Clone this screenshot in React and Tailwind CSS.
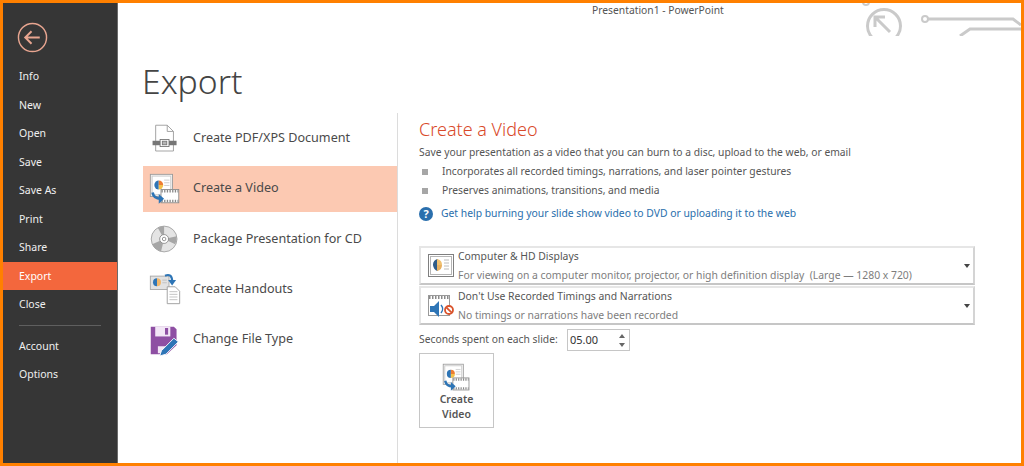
import React from 'react';

const navTop = ['Info', 'New', 'Open', 'Save', 'Save As', 'Print', 'Share', 'Export', 'Close'];
const navBottom = ['Account', 'Options'];

const PdfIcon = () => (
    <svg width="36" height="36" viewBox="0 0 36 36" fill="none">
        <path d="M7.500 2.500h13l7 7v22h-20z" stroke="#9a9a9a" strokeWidth="1" fill="#fff" />
        <path d="M20.500 2.500v7h7" stroke="#9a9a9a" />
        <rect x="4" y="20" width="27" height="5" fill="#767676" />
        <rect x="12.500" y="18.500" width="10" height="8" fill="#fff" stroke="#767676" />
        <rect x="15" y="20.500" width="5" height="4" fill="#b5b5b5" stroke="#767676" />
    </svg>
);

const VideoIcon = ({ size = 36 }) => (
    <svg width={size} height={size} viewBox="0 0 36 36" fill="none">
        <rect x="1.500" y="1.500" width="25" height="25" fill="#f4f4f4" stroke="#9a9a9a" />
        <rect x="3.500" y="3.500" width="21" height="21" fill="#fff" stroke="#c8c8c8" />
        <path d="M11 8.500a5 5 0 1 0 0 10z" fill="#2e75b6" />
        <path d="M11 8.500a5 5 0 0 1 5 5h-5z" fill="#ed7d31" />
        <path d="M11 13.500h5a5 5 0 0 1-5 5z" fill="#f3c14b" />
        <path d="M17 8h6M17 11h6M17 14h6" stroke="#c8c8c8" />
        <rect x="13.500" y="18.500" width="20" height="15" fill="#fff" stroke="#8a8a8a" />
        <path d="M14 20.500h19M14 31.500h19" stroke="#8a8a8a" strokeWidth="3" strokeDasharray="1.500 1.500" />
        <path d="M4 22c1 5 4 7 9 7" stroke="#2e75b6" strokeWidth="3" />
        <path d="M11 23.500l6 5.500-6 5.500z" fill="#2e75b6" />
    </svg>
);

const CdIcon = () => (
    <svg width="36" height="36" viewBox="0 0 36 36" fill="none">
        <circle cx="17" cy="18" r="14.500" fill="#e4e4e4" stroke="#a0a0a0" />
        <path d="M17 18L10 5.500A15 15 0 0 1 17 3.500zM17 18l14-3a15 15 0 0 1-1.500 9zM17 18l-3.500 14a15 15 0 0 1-10-8z" fill="#a6a6a6" />
        <circle cx="17" cy="18" r="5" fill="#fff" stroke="#8a8a8a" />
        <circle cx="17" cy="18" r="2" fill="#fff" stroke="#8a8a8a" />
    </svg>
);

const HandoutIcon = () => (
    <svg width="36" height="36" viewBox="0 0 36 36" fill="none">
        <rect x="1.500" y="3.500" width="21" height="15" fill="#e2e2e2" stroke="#a6a6a6" />
        <path d="M9 6a4.500 4.500 0 1 0 0 9z" fill="#2e75b6" />
        <path d="M9 6a4.500 4.500 0 0 1 4.500 4.500A4.500 4.500 0 0 1 9 15z" fill="#f0b66a" />
        <path d="M15 8h5M15 11h5" stroke="#bcbcbc" />
        <path d="M18 3c5-2 8 0 8 6" stroke="#2e75b6" strokeWidth="2.500" />
        <path d="M21.500 8h9l-4.500 6z" fill="#2e75b6" />
        <path d="M20.500 15.500h9l5 5v14h-14z" fill="#fff" stroke="#9a9a9a" />
        <path d="M23 21h9M23 24h9M23 27h9M23 30h9" stroke="#bcbcbc" />
    </svg>
);

const SaveIcon = () => (
    <svg width="36" height="36" viewBox="0 0 36 36" fill="none">
        <path d="M2 3h26l3 3v18l-11 10H2z" fill="#8e4fa3" />
        <rect x="7" y="3" width="17" height="11" fill="#f2e6f6" />
        <rect x="18" y="4.500" width="3.500" height="7.500" fill="#8e4fa3" />
        <path d="M10 33v-8h10v3l-4 5z" fill="#f2e6f6" />
        <path d="M12 36l2-6 14-14 5 4-14 14z" fill="#2e75b6" stroke="#fff" />
    </svg>
);

const DisplayIcon = () => (
    <svg width="26" height="24" viewBox="0 0 26 24" fill="none">
        <rect x="0.500" y="0.500" width="25" height="22" fill="#fff" stroke="#7f7f7f" />
        <rect x="2.500" y="2.500" width="21" height="18" fill="#fff" stroke="#b5b5b5" />
        <path d="M10 5a5.500 5.500 0 0 0-5 5.500c0 3 2.500 6.500 5 6.500z" fill="#2f5c88" />
        <path d="M9 5a6 6 0 0 1 5 6H9z" fill="#f0c070" />
        <path d="M9 11h5a6 6 0 0 1-5 6z" fill="#e8b060" />
        <path d="M16 6h5M16 9h5M16 12h5M16 15h5" stroke="#bcbcbc" />
    </svg>
);

const TimingIcon = () => (
    <svg width="28" height="28" viewBox="0 0 28 28" fill="none">
        <rect x="1.500" y="3.500" width="21" height="20" fill="#fff" stroke="#9a9a9a" />
        <path d="M2 5.500h20" stroke="#8a8a8a" strokeWidth="3" strokeDasharray="1.500 1.500" />
        <path d="M3 14h4l5-5v16l-5-5H3z" fill="#2e75b6" />
        <path d="M14 13a6 6 0 0 1 0 8" stroke="#2e75b6" strokeWidth="1.500" />
        <circle cx="22" cy="18" r="4" fill="#fff" stroke="#d9532c" strokeWidth="1.800" />
        <path d="M19.300 15.300l5.400 5.400" stroke="#d9532c" strokeWidth="1.800" />
    </svg>
);

const HelpIcon = () => (
    <div className="w-[14px] h-[14px] rounded-full bg-[#2a6fad] text-white text-[11px] font-bold leading-[14px] text-center">?</div>
);

const Caret = () => (
    <div className="w-0 h-0 border-l-[3.500px] border-r-[3.500px] border-t-[4px] border-l-transparent border-r-transparent border-t-[#444]" />
);

const exportOptions = [
    { label: 'Create PDF/XPS Document', icon: <PdfIcon /> },
    { label: 'Create a Video', icon: <VideoIcon />, active: true },
    { label: 'Package Presentation for CD', icon: <CdIcon /> },
    { label: 'Create Handouts', icon: <HandoutIcon /> },
    { label: 'Change File Type', icon: <SaveIcon /> },
];

const Dropdown = ({ icon, title, sub }) => (
    <div className="h-[39px] border-2 border-[#e6e6e6] border-b-[#c6c6c6] border-r-[#d4d4d4] flex items-center">
        <div className="w-[36px] pl-[3px] flex justify-center flex-shrink-0">{icon}</div>
        <div className="flex-grow pl-[1px]">
            <div className="text-[10.400px] leading-[18px] text-[#555] mb-[1px]">{title}</div>
            <div className="text-[10.400px] leading-[18px] text-[#7d7d7d] whitespace-pre">{sub}</div>
        </div>
        <div className="pr-[3px]"><Caret /></div>
    </div>
);

export default function App() {
    return (
        <div className="w-[1024px] h-[466px] border-[3px] border-[#ff8000] bg-white flex overflow-hidden relative font-['Noto_Sans',sans-serif]">
            {/* Backstage nav */}
            <div className="w-[115px] flex-shrink-0 bg-[#363636] border-r border-r-[#6b6b6b] text-[#f0f0f0] text-[10.500px]">
                <div className="pt-[19px] pl-[14px] h-[59px]">
                    <svg width="31" height="31" viewBox="0 0 32 32" fill="none" stroke="#e8a590">
                        <circle cx="16" cy="16" r="14.500" strokeWidth="1.500" />
                        <path d="M8.500 16h15M15 9.500L8.500 16l6.500 6.500" strokeWidth="2" />
                    </svg>
                </div>
                {navTop.map((item) => (
                    <div
                        key={item}
                        className={`h-[28.500px] leading-[28.500px] pl-[16px] ${item === 'Export' ? 'bg-[#f3673d] text-white' : ''}`}
                    >
                        {item}
                    </div>
                ))}
                <div className="mx-[16px] mt-[6px] mb-[6px] h-px bg-[#5f5f5f]" />
                {navBottom.map((item) => (
                    <div key={item} className="h-[28.500px] leading-[28.500px] pl-[16px]">{item}</div>
                ))}
            </div>

            {/* Main area */}
            <div className="flex-grow flex flex-col min-w-0">
                <div className="h-[14px] text-[10.300px] leading-[14px] text-[#555] pl-[474px]">Presentation1 - PowerPoint</div>
                <div className="h-[96px] pl-[24px] pt-[42px] text-[33.700px] leading-[44px] font-light text-[#444]">Export</div>

                <div className="flex flex-grow ml-[25px]">
                    <div className="w-[254px] flex-shrink-0 pt-[3px]">
                        {exportOptions.map((opt) => (
                            <div
                                key={opt.label}
                                className={`h-[45.250px] mb-[5px] flex items-center gap-[12px] pl-[6px] text-[12.600px] text-[#4a4a4a] ${opt.active ? 'bg-[#fcc9b2]' : ''}`}
                            >
                                <div className="w-[32px] h-[32px] flex-shrink-0 [&>svg]:w-[32px] [&>svg]:h-[32px]">{opt.icon}</div>
                                <span>{opt.label}</span>
                            </div>
                        ))}
                    </div>

                    <div className="flex-grow border-l border-l-[#dcdcdc] pl-[21px] pr-[46px]">
                        <div className="text-[18px] leading-[24px] font-light text-[#d9492a] pt-[4px]">Create a Video</div>
                        <div className="text-[10.300px] leading-[19px] text-[#555] mt-[2px]">Save your presentation as a video that you can burn to a disc, upload to the web, or email</div>
                        <div className="text-[10.300px] leading-[19px] text-[#555] flex items-center">
                            <span className="w-[6px] h-[6px] bg-[#a6a6a6] ml-[3px] mr-[14px]" />
                            Incorporates all recorded timings, narrations, and laser pointer gestures
                        </div>
                        <div className="text-[10.300px] leading-[19px] text-[#555] flex items-center">
                            <span className="w-[6px] h-[6px] bg-[#a6a6a6] ml-[3px] mr-[14px]" />
                            Preserves animations, transitions, and media
                        </div>
                        <div className="text-[10.350px] leading-[19px] text-[#2a6fad] flex items-center gap-[8px] mt-[4px]">
                            <HelpIcon />
                            Get help burning your slide show video to DVD or uploading it to the web
                        </div>

                        <div className="mt-[23px] flex flex-col gap-px">
                            <Dropdown
                                icon={<DisplayIcon />}
                                title="Computer & HD Displays"
                                sub="For viewing on a computer monitor, projector, or high definition display  (Large — 1280 x 720)"
                            />
                            <Dropdown
                                icon={<TimingIcon />}
                                title="Don't Use Recorded Timings and Narrations"
                                sub="No timings or narrations have been recorded"
                            />
                        </div>

                        <div className="flex items-center mt-[4px] h-[22px] text-[10.300px] text-[#555]">
                            <span className="w-[148px] whitespace-nowrap">Seconds spent on each slide:</span>
                            <div className="w-[63px] h-[22px] border border-[#c6c6c6] flex items-center justify-between pl-[2px] pr-[4px] text-[#333] text-[11px]">
                                05.00
                                <div className="flex flex-col gap-[5px]">
                                    <div className="w-0 h-0 border-l-[3px] border-r-[3px] border-b-[4px] border-l-transparent border-r-transparent border-b-[#666]" />
                                    <div className="w-0 h-0 border-l-[3px] border-r-[3px] border-t-[4px] border-l-transparent border-r-transparent border-t-[#666]" />
                                </div>
                            </div>
                        </div>

                        <div className="mt-[2px] w-[75px] h-[75px] border border-[#c6c6c6] flex flex-col items-center pt-[9px] text-[10.500px] leading-[14.500px] font-semibold text-[#555]">
                            <VideoIcon size={29} />
                            <div className="text-center">Create<br />Video</div>
                        </div>
                    </div>
                </div>
            </div>

            {/* Title bar artwork */}
            <svg className="absolute right-0 top-0" width="160" height="33" viewBox="0 0 160 33" fill="none" stroke="#cacaca" strokeWidth="3">
                <circle cx="23" cy="23" r="16.500" />
                <path d="M14 14l15 15M14 24V14h10" />
                <circle cx="64" cy="16" r="3" strokeWidth="2" />
                <path d="M67 16h85l8 6M99 33l10-7h51" />
                <circle cx="5" cy="-1" r="3" strokeWidth="2" />
            </svg>
        </div>
    );
}
